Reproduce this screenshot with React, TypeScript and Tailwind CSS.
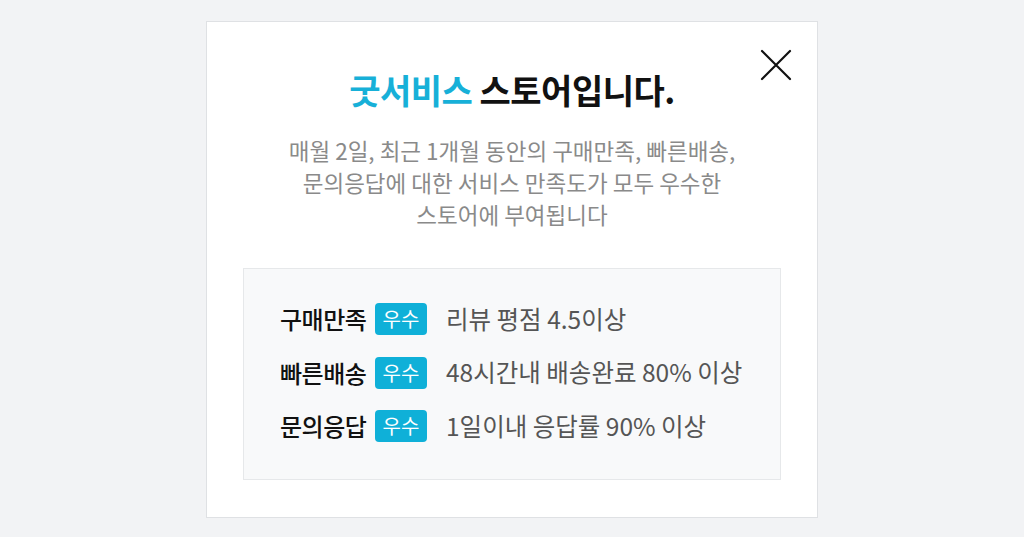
const criteria = [
  { label: "구매만족", desc: "리뷰 평점 4.5이상" },
  { label: "빠른배송", desc: "48시간내 배송완료 80% 이상" },
  { label: "문의응답", desc: "1일이내 응답률 90% 이상" },
]

function CloseIcon() {
  return (
    <svg width="32" height="32" viewBox="0 0 32 32" fill="none">
      <path d="M2 2L30 30M30 2L2 30" stroke="#111" strokeWidth="2.2" strokeLinecap="round" />
    </svg>
  )
}

export default function App() {
  return (
    <div
      className="min-h-[537px] bg-[#f2f3f5] pt-[21px]"
      style={{ fontFamily: '"Noto Sans CJK KR", "Noto Sans", sans-serif' }}
    >
      <div className="relative mx-auto w-[612px] border border-[#dfe1e4] bg-white px-[36px] pt-[48px] pb-[37px]">
        <button className="absolute top-[27px] right-[25px]">
          <CloseIcon />
        </button>

        <h1 className="text-center text-[34px] font-bold leading-[40px] tracking-[-0.5px] text-[#111]">
          <span className="text-[#17b0d8]">굿서비스</span> 스토어입니다.
        </h1>

        <p className="mt-[24px] text-center text-[22.5px] leading-[32px] text-[#8a8a8a]">
          매월 2일, 최근 1개월 동안의 구매만족, 빠른배송,
          <br />
          문의응답에 대한 서비스 만족도가 모두 우수한
          <br />
          스토어에 부여됩니다
        </p>

        <div className="mt-[38px] flex flex-col gap-[21.5px] border border-[#e6e8ea] bg-[#f8f9fa] px-[36px] pt-[34px] pb-[37px]">
          {criteria.map((c) => (
            <div key={c.label} className="flex h-[32px] items-center whitespace-nowrap">
              <span className="w-[87px] shrink-0 text-[24px] font-medium tracking-[-0.5px] text-[#111]">
                {c.label}
              </span>
              <span className="ml-[8px] flex h-[32px] w-[52px] shrink-0 items-center justify-center rounded-[4px] bg-[#0fb0d8] text-[20px] text-white">
                우수
              </span>
              <span className="ml-[19px] text-[24.5px] text-[#555]">{c.desc}</span>
            </div>
          ))}
        </div>
      </div>
    </div>
  )
}
